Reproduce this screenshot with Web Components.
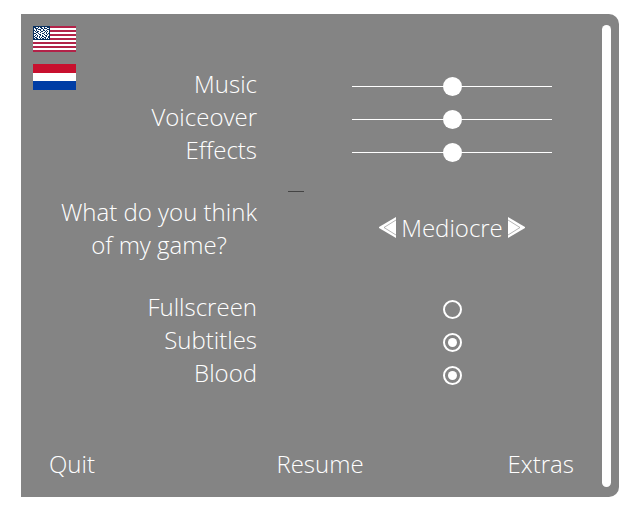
<!DOCTYPE html>
<html lang="en">
<head>
<meta charset="utf-8">
<title>Settings</title>
<style>
  html, body { margin: 0; background: #fff; }
  body { font: 300 24px/33px "Open Sans", "Noto Sans", sans-serif; font-variant-ligatures: none; color: #fff; }
</style>
</head>
<body>
<menu-panel>
  <flag-list slot="flags"></flag-list>
  <slider-row>Music</slider-row>
  <slider-row>Voiceover</slider-row>
  <slider-row>Effects</slider-row>
  <menu-gap marked></menu-gap>
  <choice-row value="Mediocre">What do you think<br>of my game?</choice-row>
  <menu-gap></menu-gap>
  <toggle-row>Fullscreen</toggle-row>
  <toggle-row checked>Subtitles</toggle-row>
  <toggle-row checked>Blood</toggle-row>
  <menu-actions slot="actions"></menu-actions>
</menu-panel>
<script>
const define = (name, html, setup) => customElements.define(name, class extends HTMLElement {
  connectedCallback() {
    if (this.shadowRoot) return;
    const t = document.createElement('template');
    t.innerHTML = html;
    this.attachShadow({ mode: 'open' }).append(t.content.cloneNode(true));
    if (setup) setup(this, this.shadowRoot);
  }
});

const rowCss = `
  :host { display: grid; grid-template-columns: 217fr 200fr; column-gap: 95px; align-items: center; }
  label { justify-self: end; text-align: center; white-space: nowrap; }
  input { appearance: none; margin: 6px 0 0; }`;

define('menu-panel', `
  <style>
    :host { display: flex; box-sizing: border-box; min-height: 100vh; padding: 14px 21px 13px; }
    .panel { flex: 1; display: grid; grid-template-columns: 1fr 9px; background: #848484; border-radius: 0 10px 10px 0; padding-right: 8px; }
    .page { display: grid; grid-template-rows: 1fr auto; padding-bottom: 17px; }
    .flags, .rows { grid-area: 1 / 1; }
    .flags { justify-self: start; align-self: start; padding: 12px; z-index: 1; }
    .rows { padding: 53px 50px 0 19px; }
    .bar { margin: 11px 0 10px; border-radius: 5px; background: #fff; }
  </style>
  <main class="panel">
    <div class="page">
      <div class="flags"><slot name="flags"></slot></div>
      <div class="rows"><slot></slot></div>
      <slot name="actions"></slot>
    </div>
    <div class="bar"></div>
  </main>`);

const pixels = [
  '.................',
  '...##.#..##.##...',
  '.#...###..#...##.',
  '.##.#...##.###...',
  '..#.###.##..#.##.',
  '.#.#..##..##.#.#.',
  '.##..##.###.#.##.',
  '...##.###..##.#..',
  '.##.##..###.##.#.',
  '.#.#.##.#.##..##.',
  '..##.#.##..##.#..',
  '.#..##.#.##..##..',
  '..#..##.#..#.#.#.',
  '.................'];
const stars = pixels.flatMap((r, y) => [...r].map((c, x) => c === '#' ? `M${x} ${y}h1v1h-1z` : '')).join('');
const stripes = [1, 3, 5, 7, 9, 11].map(i => `M0 ${i * 2}h43v2H0z`).join('');

define('flag-list', `
  <style>
    :host { display: grid; gap: 12px; }
    button { display: block; padding: 0; border: 0; background: none; cursor: pointer; }
    svg { display: block; width: 43px; height: 26px; shape-rendering: crispEdges; }
  </style>
  <button type="button" aria-label="English"><svg viewBox="0 0 43 26"><path fill="#b22248" d="M0 0h43v26H0z"/><path fill="#fff" d="${stripes}"/><path fill="#0a3161" d="M0 0h17v14H0z"/><path fill="#fff" d="${stars}"/></svg></button>
  <button type="button" aria-label="Nederlands"><svg viewBox="0 0 43 26"><path fill="#c8102e" d="M0 0h43v9H0z"/><path fill="#fff" d="M0 9h43v8H0z"/><path fill="#003da5" d="M0 17h43v9H0z"/></svg></button>`);

define('slider-row', `
  <style>${rowCss}
    input { width: 100%; height: 19px; background: linear-gradient(#fff, #fff) 0 9px / 100% 1px no-repeat; }
    input::-webkit-slider-thumb { appearance: none; width: 19px; height: 19px; border-radius: 50%; background: #fff; }
  </style>
  <label for="c"><slot></slot></label><input id="c" type="range" min="0" max="100" value="50">`);

define('toggle-row', `
  <style>${rowCss}
    input { justify-self: center; display: grid; place-items: center; box-sizing: border-box; width: 19px; height: 19px; border: 2px solid #fff; border-radius: 50%; }
    input:checked::before { content: ""; width: 9px; height: 9px; border-radius: 50%; background: #fff; }
  </style>
  <label for="c"><slot></slot></label><input id="c" type="checkbox">`,
  (el, root) => { root.querySelector('input').checked = el.hasAttribute('checked'); });

const arrow = `<svg viewBox="0 0 17 21"><path fill="#fff" d="M17 0v21L0 11v-1z"/><path fill="none" stroke="#848484" stroke-opacity=".6" d="M17 3L5 10.500L17 18"/></svg>`;

define('choice-row', `
  <style>${rowCss}
    .choice { display: flex; justify-content: center; align-items: center; gap: 5px; padding-bottom: 2px; }
    button { padding: 0; border: 0; background: none; cursor: pointer; }
    svg { display: block; width: 17px; height: 21px; }
    .next svg { transform: scaleX(-1); }
  </style>
  <label for="c"><slot></slot></label>
  <div class="choice">
    <button type="button" aria-label="Previous">${arrow}</button>
    <output id="c"></output>
    <button class="next" type="button" aria-label="Next">${arrow}</button>
  </div>`,
  (el, root) => { root.querySelector('output').textContent = el.getAttribute('value'); });

define('menu-gap', `
  <style>
    :host { display: flex; justify-content: center; align-items: flex-end; box-sizing: border-box; height: 29px; padding-bottom: 3px; }
    :host([marked])::before { content: ""; width: 16px; height: 1px; background: #444; }
  </style>`);

define('menu-actions', `
  <style>
    :host { display: grid; grid-template-columns: 1fr auto 1fr; padding: 0 11px 0 28px; }
    button { padding: 0; border: 0; background: none; font: inherit; color: inherit; cursor: pointer; }
    button:first-of-type { justify-self: start; }
    button:last-of-type { justify-self: end; padding-right: 17px; }
  </style>
  <button type="button">Quit</button><button type="button">Resume</button><button type="button">Extras</button>`);
</script>
</body>
</html>
